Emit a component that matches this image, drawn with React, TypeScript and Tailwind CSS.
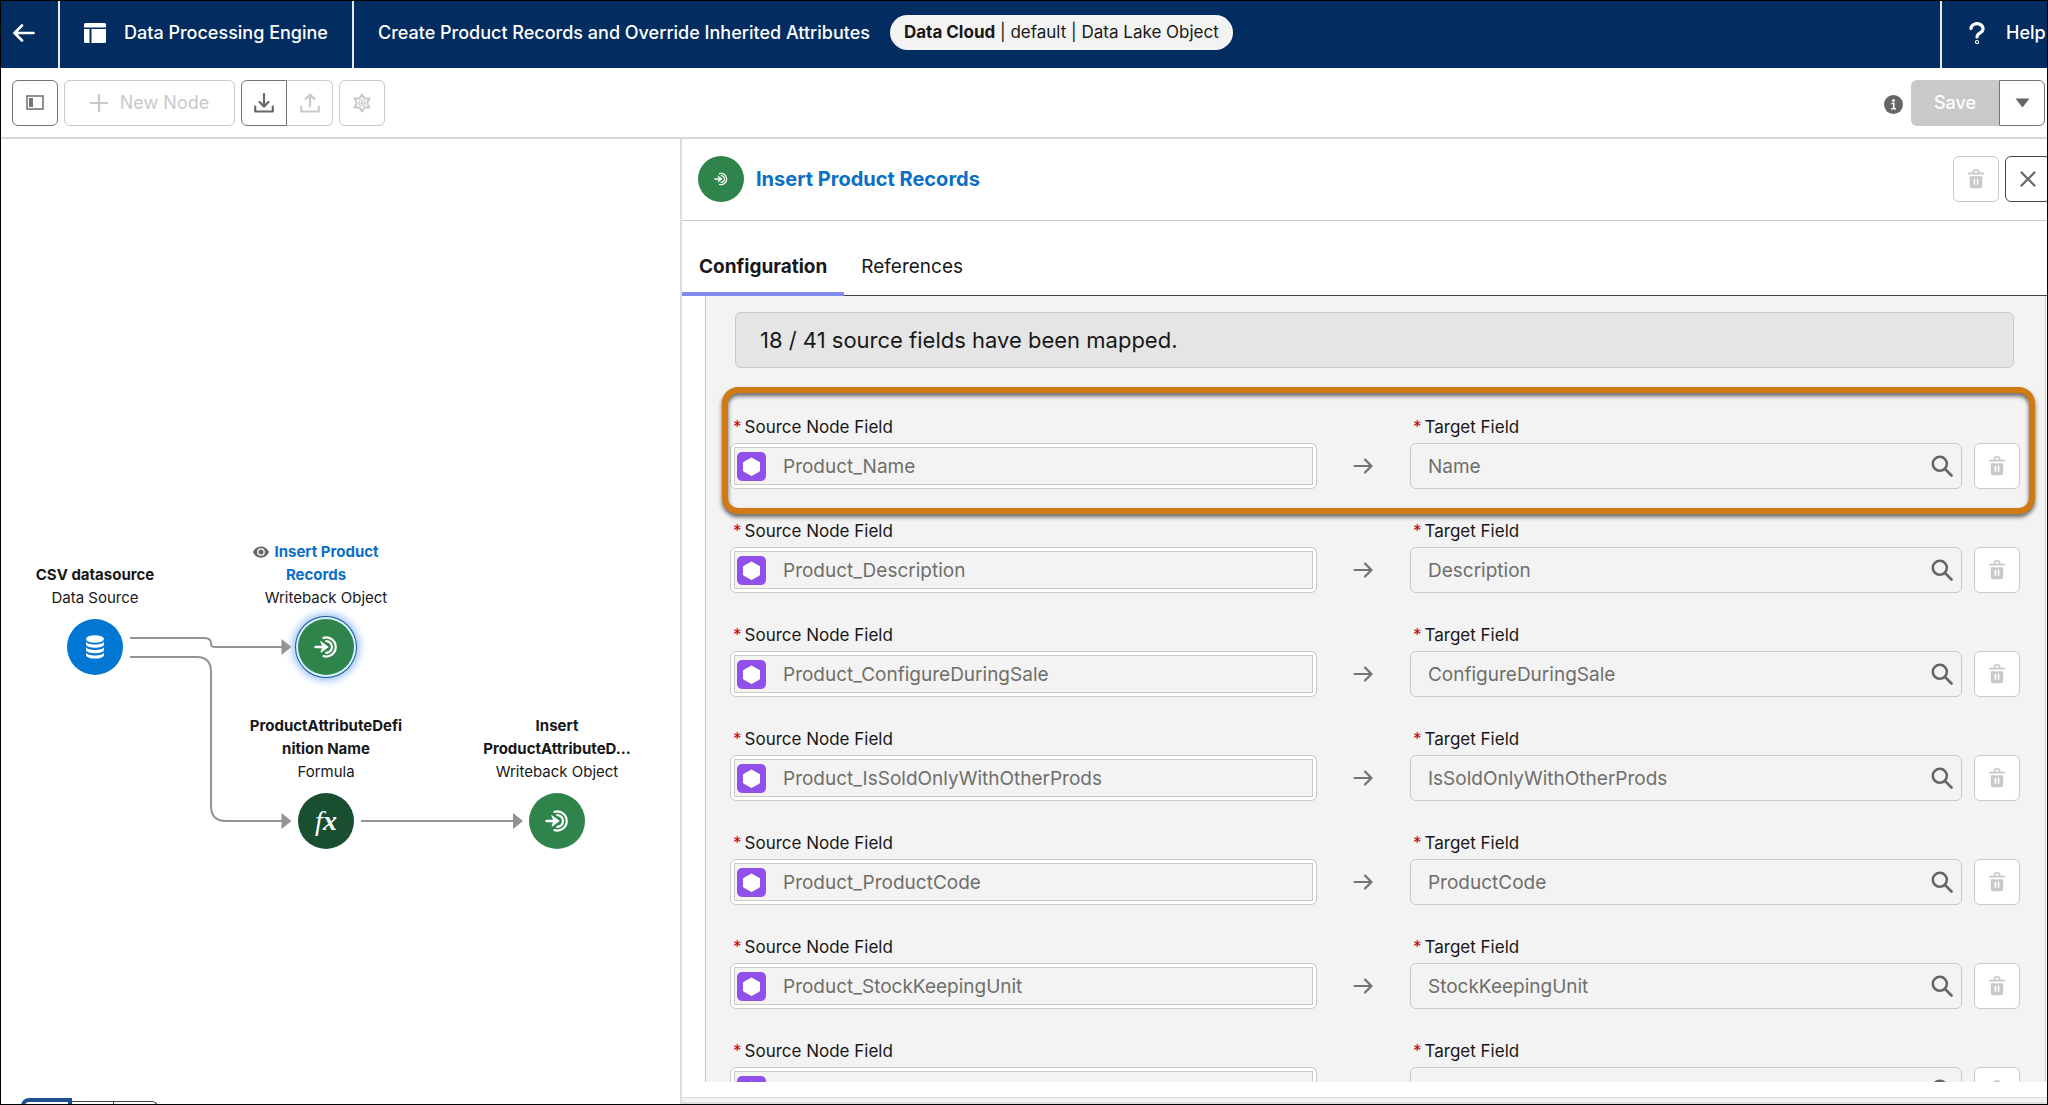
import type { ReactNode } from 'react';

type Mapping = { source: string; target: string };

const mappings: Mapping[] = [
  { source: 'Product_Name', target: 'Name' },
  { source: 'Product_Description', target: 'Description' },
  { source: 'Product_ConfigureDuringSale', target: 'ConfigureDuringSale' },
  { source: 'Product_IsSoldOnlyWithOtherProds', target: 'IsSoldOnlyWithOtherProds' },
  { source: 'Product_ProductCode', target: 'ProductCode' },
  { source: 'Product_StockKeepingUnit', target: 'StockKeepingUnit' },
  { source: '', target: '' },
];

function TrashIcon() {
  return (
    <svg width="16" height="20" viewBox="0 0 16 20" fill="none" stroke="currentColor">
      <path d="M5.5 3.5V2.2a1 1 0 0 1 1-1h3a1 1 0 0 1 1 1v1.3" strokeWidth="1.8" />
      <path d="M1 4.5h14" strokeWidth="2" strokeLinecap="round" />
      <path
        d="M1.8 7.2h12.4v10a2 2 0 0 1-2 2H3.8a2 2 0 0 1-2-2zM5.6 9.800v6h1.600v-6zM8.800 9.800v6h1.600v-6z"
        fill="currentColor"
        fillRule="evenodd"
        stroke="none"
      />
    </svg>
  );
}

function WritebackIcon({ size }: { size: number }) {
  return (
    <svg width={size} height={size} viewBox="0 0 24 24" fill="none" stroke="white" strokeWidth="2.2" strokeLinecap="round">
      <path d="M1.5 12h9" strokeWidth="2.4" />
      <path d="M7 6.800l7.200 5.200L7 17.200l1.800-5.200z" fill="white" strokeWidth="1" strokeLinejoin="round" />
      <path d="M9.500 2.900A9.500 9.500 0 1 1 9.500 21.100" />
      <path d="M12.200 6.200a5.800 5.800 0 1 1 0 11.600" />
    </svg>
  );
}

function SearchIcon() {
  return (
    <svg width="22" height="22" viewBox="0 0 22 22" fill="none" stroke="#666" strokeWidth="2.6" strokeLinecap="round">
      <circle cx="8.8" cy="8.8" r="7" />
      <path d="M14 14l6.5 6.5" />
    </svg>
  );
}

function ToolButton({ label, children, className }: { label: string; children: ReactNode; className: string }) {
  return (
    <button aria-label={label} className={`flex h-[46px] w-[46px] shrink-0 items-center justify-center border bg-white ${className}`}>
      {children}
    </button>
  );
}

function Header() {
  return (
    <header className="flex h-[67px] shrink-0 items-stretch bg-[#032d60] text-lg font-medium text-white">
      <a href="#back" aria-label="Back" className="flex w-[57px] items-center pb-1 pl-3">
        <svg width="22" height="18" viewBox="0 0 22 18" fill="none" stroke="white" strokeWidth="2.6" strokeLinecap="round" strokeLinejoin="round">
          <path d="M9 1.5L1.5 9 9 16.5M2 9h18.5" />
        </svg>
      </a>
      <div className="flex items-center gap-[18px] border-x-2 border-white/90 pr-6 pb-1 pl-6">
        <svg width="22" height="20" viewBox="0 0 22 20" fill="white">
          <path d="M1.5 0h19a1.5 1.5 0 0 1 1.500 1.500V4.500H0V1.500A1.500 1.500 0 0 1 1.500 0zM0 6h5.500v14H1.500A1.500 1.500 0 0 1 0 18.500zM7.500 6H22v12.500a1.500 1.500 0 0 1-1.500 1.500h-13z" />
        </svg>
        <span>Data Processing Engine</span>
      </div>
      <div className="flex items-center gap-5 pb-1 pl-6">
        <h1>Create Product Records and Override Inherited Attributes</h1>
        <span className="flex h-[35px] items-center rounded-full bg-[#f3f3f3] px-[14px] text-[17px] font-normal whitespace-pre text-[#181818]">
          <b>Data Cloud</b> | default | Data Lake Object
        </span>
      </div>
      <a href="#help" className="ml-auto flex w-[107px] items-center gap-5 overflow-hidden border-l-2 border-white/90 pb-1 pl-[26px]">
        <svg width="18" height="22" viewBox="0 0 18 22" fill="none" stroke="white" strokeWidth="3.2" strokeLinecap="round">
          <path d="M3 6.5a6 5 0 1 1 9.500 4.200C10 12.300 9 13 9 15" />
          <circle cx="9" cy="20" r="0.5" />
        </svg>
        <span>Help</span>
      </a>
    </header>
  );
}

function Toolbar() {
  return (
    <div className="flex h-[71px] shrink-0 items-center border-b-2 border-[#d8d8d8] pr-[2px] pl-[11px]">
      <ToolButton label="Toggle panel" className="mr-[6px] rounded-md border-[#747474]">
        <svg width="18" height="15" viewBox="0 0 18 15">
          <rect x="1" y="1" width="16" height="13" fill="none" stroke="#747474" strokeWidth="1.6" />
          <rect x="3" y="3" width="4" height="9" fill="#747474" />
        </svg>
      </ToolButton>
      <button className="mr-[6px] flex h-[46px] w-[171px] items-center justify-center gap-3 rounded-md border border-[#c9c9c9] text-lg text-[#c9c9c9]">
        <svg width="18" height="18" viewBox="0 0 18 18" stroke="#c9c9c9" strokeWidth="2.2" strokeLinecap="round">
          <path d="M9 1v16M1 9h16" />
        </svg>
        New Node
      </button>
      <ToolButton label="Download" className="rounded-l-md border-[#747474] text-[#666]">
        <svg width="20" height="20" viewBox="0 0 20 20" fill="none" stroke="currentColor" strokeWidth="2.2" strokeLinecap="round" strokeLinejoin="round">
          <path d="M10 1v12M5.5 9l4.500 4.500L14.500 9M1.200 13.500v5h17.600v-5" />
        </svg>
      </ToolButton>
      <ToolButton label="Upload" className="mr-[6px] rounded-r-md border-l-0 border-[#c9c9c9] text-[#c9c9c9]">
        <svg width="20" height="20" viewBox="0 0 20 20" fill="none" stroke="currentColor" strokeWidth="2.2" strokeLinecap="round" strokeLinejoin="round">
          <path d="M10 13.500v-12M5.500 6L10 1.500 14.500 6M1.200 13.500v5h17.600v-5" />
        </svg>
      </ToolButton>
      <ToolButton label="Settings" className="rounded-md border-[#c9c9c9] text-[#c9c9c9]">
        <svg width="18" height="20" viewBox="0 0 18 20" fill="none" stroke="currentColor">
          <path d="M9 1.500l2 3.300 1.300.7L16.500 5.500 14.500 9v2l2 3.500-4.200 0-1.300.7-2 3.300-2-3.300-1.300-.7-4.200 0 2-3.500V9l-2-3.500 4.200 0 1.300-.7z" strokeWidth="2" strokeLinejoin="round" />
          <circle cx="9" cy="10" r="3" strokeWidth="1.2" />
          <circle cx="9" cy="10" r="1.5" fill="currentColor" stroke="none" />
        </svg>
      </ToolButton>
      <svg className="mt-1 mr-2 ml-auto" width="19" height="19" viewBox="0 0 19 19">
        <circle cx="9.5" cy="9.5" r="9.5" fill="#666" />
        <circle cx="9.5" cy="5.5" r="1.5" fill="white" />
        <path d="M7.500 8.500h2.300v5M7.200 13.700h4.800" stroke="white" strokeWidth="1.6" fill="none" />
      </svg>
      <button className="h-[46px] w-[88px] rounded-l-md bg-[#c9c9c9] text-lg font-medium text-white">Save</button>
      <ToolButton label="More save options" className="rounded-r-md border-[#747474]">
        <svg width="15" height="10" viewBox="0 0 15 10" fill="#666">
          <path d="M0.5 0.5h14L7.5 9.500z" />
        </svg>
      </ToolButton>
    </div>
  );
}

function NodeCaption({ title, kind, className }: { title: ReactNode; kind: string; className: string }) {
  return (
    <div className={`absolute w-[180px] text-center text-[15px]/[23px] text-[#181818] ${className}`}>
      <div className="font-bold">{title}</div>
      <div>{kind}</div>
    </div>
  );
}

function Canvas() {
  return (
    <section aria-label="Flow" className="relative w-[679px] shrink-0 overflow-hidden bg-white">
      <svg className="absolute inset-0" width="679" height="900" viewBox="1 139 679 900" fill="none" stroke="#939393" strokeWidth="2">
        <path d="M130 638h74q7 0 7 5v1q0 3 4 3h67" />
        <path d="M130 657h67q14 0 14 15v134q0 15 15 15h56" />
        <path d="M361 821h152" />
        <path d="M281.500 639v16l10-8zM281.500 813v16l10-8zM513 813v16l10-8z" fill="#939393" stroke="none" />
      </svg>

      <NodeCaption title="CSV datasource" kind="Data Source" className="top-[424px] left-1" />
      <button aria-label="CSV datasource" className="absolute top-[480px] left-[66px] flex h-14 w-14 items-center justify-center rounded-full bg-[#0176d3]">
        <svg width="18" height="24" viewBox="0 0 18 24" fill="white">
          <ellipse cx="9" cy="4" rx="9" ry="3.8" />
          <path d="M0 6.500c1 4 17 4 18 0v3.200c-1 4-17 4-18 0zM0 12c1 4 17 4 18 0v3.200c-1 4-17 4-18 0zM0 17.500c1 4 17 4 18 0v2.700c-1 4.500-17 4.500-18 0z" />
        </svg>
      </button>

      <NodeCaption
        title={
          <div className="pr-5 text-[#0b6fc4]">
            <svg className="mr-[5px] inline align-[-1px]" width="16" height="12" viewBox="0 0 16 12">
              <path d="M0 6C3-1.500 13-1.500 16 6 13 13.500 3 13.500 0 6z" fill="#666" />
              <circle cx="8" cy="6" r="3.2" fill="none" stroke="white" strokeWidth="1.3" />
            </svg>
            Insert Product
            <br />
            Records
          </div>
        }
        kind="Writeback Object"
        className="top-[401px] left-[235px]"
      />
      <button aria-label="Insert Product Records" className="absolute top-[480px] left-[297px] flex h-14 w-14 items-center justify-center rounded-full bg-[#2e844a] shadow-[0_0_0_2px_#d6f5fb,0_0_0_3px_#1b5297,0_0_8px_5px_#8ab8f5]">
        <WritebackIcon size={24} />
      </button>

      <NodeCaption title={<>ProductAttributeDefi<br />nition Name</>} kind="Formula" className="top-[575px] left-[235px]" />
      <button aria-label="ProductAttributeDefinition Name" className="absolute top-[654px] left-[297px] flex h-14 w-14 items-center justify-center rounded-full bg-[#194e31]">
        <span className="font-['Liberation_Serif',serif] text-[28px]/8 text-white italic">
          f<b>x</b>
        </span>
      </button>

      <NodeCaption title={<>Insert<br />ProductAttributeD...</>} kind="Writeback Object" className="top-[575px] left-[466px]" />
      <button aria-label="Insert ProductAttributeDefinition" className="absolute top-[654px] left-[528px] flex h-14 w-14 items-center justify-center rounded-full bg-[#2e844a]">
        <WritebackIcon size={24} />
      </button>

      {/* Zoom controls, cut off by the bottom of the window */}
      <div className="absolute -bottom-9 left-5 flex h-[42px] items-end">
        <button aria-label="Zoom in" className="h-[42px] w-[51px] rounded-l-lg border-4 border-[#1f4f8f] bg-white" />
        <button aria-label="Zoom out" className="h-[39px] w-[42px] border-t border-r border-[#444] bg-white" />
        <button aria-label="Fit" className="h-[39px] w-[44px] rounded-r-md border-t border-r border-[#444] bg-white" />
      </div>
    </section>
  );
}

function MappingRow({ mapping, index }: { mapping: Mapping; index: number }) {
  return (
    <div className="flex items-end">
      <div className="min-w-0 flex-[588]">
        <label htmlFor={`source-${index}`} className="mb-[5px] flex gap-[3px] pl-[3px] text-[17px]/[22px] text-[#181818]">
          <span className="text-[#ba0517]">*</span>Source Node Field
        </label>
        <div className="flex h-[46px] rounded-md border border-[#c9c9c9] bg-white p-[3px]">
          <div className="flex flex-1 items-center border border-[#c9c9c9] bg-[#f3f3f3] pl-[2px]">
            <svg width="29" height="29" viewBox="0 0 29 29" className="shrink-0">
              <rect width="29" height="29" rx="5" fill="#9050e9" />
              <path d="M14.500 6l8 4.400v8.700l-8 4.400-8-4.400v-8.700z" fill="white" stroke="white" strokeWidth="1" strokeLinejoin="round" />
            </svg>
            <input id={`source-${index}`} readOnly value={mapping.source} className="h-full w-full bg-transparent pl-[17px] text-[19px] text-[#706e6b] outline-none" />
          </div>
        </div>
      </div>
      <div className="flex h-[46px] w-[93px] shrink-0 items-center justify-center">
        <svg width="20" height="16" viewBox="0 0 20 16" fill="none" stroke="#747474" strokeWidth="2.2" strokeLinecap="round" strokeLinejoin="round">
          <path d="M1.500 8h16.500M12 1.500L18.500 8 12 14.500" />
        </svg>
      </div>
      <div className="min-w-0 flex-[553]">
        <label htmlFor={`target-${index}`} className="mb-[5px] flex gap-[3px] pl-[3px] text-[17px]/[22px] text-[#181818]">
          <span className="text-[#ba0517]">*</span>Target Field
        </label>
        <div className="flex h-[46px] items-center rounded-md border border-[#c9c9c9] bg-[#f3f3f3] pr-2">
          <input id={`target-${index}`} readOnly value={mapping.target} className="h-full min-w-0 flex-1 bg-transparent pl-[17px] text-[19px] text-[#706e6b] outline-none" />
          <SearchIcon />
        </div>
      </div>
      <ToolButton label="Delete mapping" className="ml-3 rounded-md border-[#c9c9c9] text-[#c9c9c9]">
        <TrashIcon />
      </ToolButton>
    </div>
  );
}

function DetailPanel() {
  return (
    <section className="flex min-w-0 flex-1 flex-col border-b-2 border-l-2 border-[#dddddd] bg-white">
      <div className="flex h-[82px] shrink-0 items-center border-b border-[#c9c9c9] pb-[2px] pl-4">
        <span className="flex h-[46px] w-[46px] items-center justify-center rounded-full bg-[#2e844a]">
          <WritebackIcon size={14} />
        </span>
        <h2 className="ml-3 text-xl font-bold text-[#0b6fc4]">Insert Product Records</h2>
        <ToolButton label="Delete node" className="mr-[6px] ml-auto rounded-md border-[#c9c9c9] text-[#c9c9c9]">
          <TrashIcon />
        </ToolButton>
        <ToolButton label="Close" className="-mr-1 rounded-md border-[#444444]">
          <svg width="16" height="16" viewBox="0 0 16 16" stroke="#666" strokeWidth="2.2" strokeLinecap="round">
            <path d="M1.500 1.500l13 13M14.500 1.500l-13 13" />
          </svg>
        </ToolButton>
      </div>
      <div role="tablist" className="flex h-[75px] shrink-0 items-end border-b border-[#444444] text-[19px] text-[#181818]">
        <button role="tab" aria-selected="true" className="-mb-px h-[53px] border-b-4 border-[#7f8ced] px-[17px] font-bold">
          Configuration
        </button>
        <button role="tab" aria-selected="false" className="-mb-px h-[53px] border-b-4 border-transparent px-[17px]">
          References
        </button>
      </div>
      <div className="min-h-0 flex-1 overflow-hidden pr-px pl-[23px]">
        <div className="border-x border-[#c9c9c9] bg-[#f3f3f3] pt-4 pr-[25px] pl-6">
          <div className="mr-[6px] ml-[5px] flex h-[56px] items-center rounded-md border border-[#c9c9c9] bg-[#e5e5e5] pt-px pl-6 text-[22px] text-[#181818]">
            18 / 41 source fields have been mapped.
          </div>
          <div className="relative mt-12 flex flex-col gap-[31px]">
            {mappings.map((mapping, i) => (
              <MappingRow key={i} mapping={mapping} index={i} />
            ))}
            <div className="pointer-events-none absolute -top-[29px] -right-[15px] -left-2 h-[127px] rounded-2xl border-6 border-[#d17a14] drop-shadow-[0_3px_2px_rgba(0,0,0,0.6)]" />
          </div>
        </div>
      </div>
      <div className="h-4 shrink-0 border-b border-[#dddddd] bg-white" />
      <div className="h-1 shrink-0 bg-[#f3f3f3]" />
    </section>
  );
}

export default function App() {
  return (
    <div className="flex h-screen flex-col overflow-hidden border border-black bg-white font-['Inter',sans-serif]">
      <Header />
      <Toolbar />
      <main className="flex min-h-0 flex-1">
        <Canvas />
        <DetailPanel />
      </main>
    </div>
  );
}
